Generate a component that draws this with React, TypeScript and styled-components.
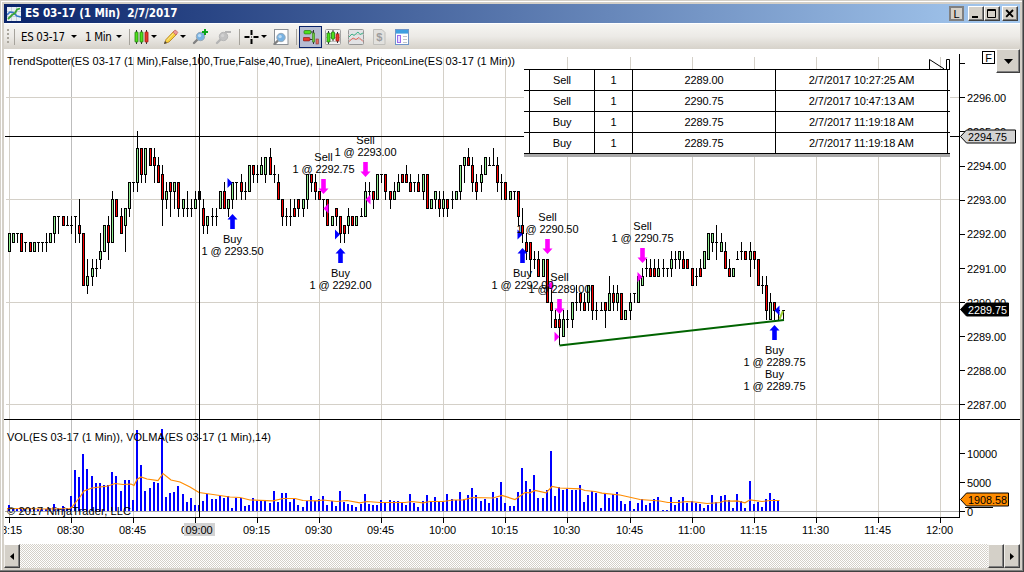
import React from 'react';
import styled, { createGlobalStyle } from 'styled-components';

const Global = createGlobalStyle`
  * { box-sizing: border-box; }
  body { margin: 0; background: #d4d0c8; overflow: hidden; }
`;

const Window = styled.div`
  width: 1024px;
  height: 572px;
  padding: 4px 2px 2px 4px;
  background: #d4d0c8;
  border-right: 1px solid #404040;
  border-bottom: 1px solid #404040;
  box-shadow: inset -1px -1px #808080, inset 1px 1px #d4d0c8, inset 2px 2px #ffffff;
  font-family: 'Liberation Sans', Arial, sans-serif;
  font-size: 11px;
  color: #000;
`;

const Client = styled.div`
  width: 1016px;
  display: flex;
  flex-direction: column;
`;

const TitleBar = styled.header`
  height: 19px;
  display: flex;
  align-items: center;
  padding: 0 2px 0 3px;
  background: linear-gradient(90deg, #0a246a, #a6caf0);
`;

const TitleText = styled.span`
  flex: 1;
  margin-left: 4px;
  font: bold 11.6px/19px 'DejaVu Sans Condensed', 'DejaVu Sans', sans-serif;
  letter-spacing: -0.12px;
  color: #fff;
  white-space: pre;
`;

const CaptionButton = styled.span<{ $gap?: number }>`
  width: 16px;
  height: 15px;
  margin-left: ${(p) => p.$gap ?? 0}px;
  background: #d4d0c8;
  border: 1px solid;
  border-color: #fff #404040 #404040 #fff;
  box-shadow: inset -1px -1px #808080;
  display: flex;
`;

const LinkButton = styled.span`
  width: 15px;
  height: 15px;
  border: 2px solid #808080;
  background: #d4d0c8;
  line-height: 12px;
  text-align: center;
`;

const Toolbar = styled.nav`
  height: 26px;
  display: flex;
  align-items: center;
  padding-left: 3px;
  border-top: 1px solid #fff;
  background: linear-gradient(#f6f5f2, #eceae6 50%, #d6d2ca);
`;

const Grip = styled.span`
  width: 2px;
  height: 15px;
  background: repeating-linear-gradient(#a9a59c 0 2px, transparent 2px 4px);
`;

const Separator = styled.span<{ $gap: number }>`
  width: 1px;
  height: 16px;
  margin-left: ${(p) => p.$gap}px;
  background: #a6a39c;
`;

const ToolLabel = styled.span<{ $gap: number; $w: number }>`
  margin-left: ${(p) => p.$gap}px;
  width: ${(p) => p.$w}px;
  font: 11.4px/14px 'DejaVu Sans Condensed', 'DejaVu Sans', sans-serif;
  letter-spacing: -0.3px;
  white-space: nowrap;
`;

const Caret = styled.span<{ $gap: number }>`
  margin-left: ${(p) => p.$gap}px;
  border: 3px solid transparent;
  border-top-color: #000;
  border-bottom: 0;
  width: 6px;
`;

const Tool = styled.span<{ $gap: number; $active?: boolean }>`
  margin-left: ${(p) => p.$gap}px;
  width: ${(p) => (p.$active ? 23 : 16)}px;
  height: ${(p) => (p.$active ? 22 : 16)}px;
  border: ${(p) => (p.$active ? '1px solid #0a246a' : '0')};
  background: ${(p) => (p.$active ? '#b6bdd2' : 'transparent')};
  display: flex;
  align-items: center;
  justify-content: center;
`;

const ChartPanel = styled.main`
  position: relative;
  height: 495px;
  background: #fff;
`;

const ChartSvg = styled.svg`
  display: block;
  font-family: 'Liberation Sans', Arial, sans-serif;
  font-size: 11px;
`;

const OrdersTable = styled.div`
  position: absolute;
  left: 520px;
  top: 20px;
  width: 426px;
  background: #fff;
  border-top: 1px solid #000;
  border-bottom: 3px solid #a9a9a9;
  padding: 0;
`;

const OrderRow = styled.div`
  height: 21px;
  padding: 0 2px 0 5px;
  border-bottom: 1px solid #000;
  display: grid;
  grid-template-columns: 65px 38px 143px 173px;
`;

const Cell = styled.span`
  border-left: 1px solid #000;
  line-height: 20px;
  text-align: center;
  letter-spacing: -0.1px;
  &:last-child { border-right: 1px solid #000; }
`;

const FixedFlag = styled.span`
  position: absolute;
  left: 978px;
  top: 2px;
  width: 13px;
  height: 13px;
  border: 1px solid #000;
  line-height: 12px;
  text-align: center;
`;

const MenuButton = styled.button`
  position: absolute;
  right: 0;
  top: 0;
  width: 24px;
  height: 24px;
  padding: 0;
  background: #d4d0c8;
  border: 1px solid;
  border-color: #f4f2ee #404040 #404040 #fff;
  box-shadow: inset -1px -1px #808080;
  display: flex;
  align-items: center;
  justify-content: center;
`;

const ScrollBar = styled.footer`
  height: 24px;
  display: flex;
  align-items: stretch;
  background: repeating-conic-gradient(#fff 0 25%, #d4d0c8 0 50%) 0 0 / 2px 2px;
`;

const ScrollButton = styled.span<{ $push?: boolean }>`
  width: 16px;
  height: 24px;
  margin-left: ${(p) => (p.$push ? 'auto' : '0')};
  background: #d4d0c8;
  border: 1px solid;
  border-color: #fff #404040 #404040 #f0eeea;
  box-shadow: inset -1px -1px #808080;
  display: flex;
  align-items: center;
  justify-content: center;
`;

/* Ticks are quarter points below 2296.00: colour, body top, body bottom, high, low. */
const CANDLES = `g16,18 g16,17 d16,16,16,17 r16,18 d17,17,17,18 r17,18 g17,18 d17,17,17,18 d17,17,17,18 d17,17,16,18
g16,17 g14,16,14,17 d14,14,14,16 r14,15 d15,15,14,15 d15,15,14,16 d14,14,14,17 r15,16,12,17 r16,22 g21,22,19,23
g20,21,19,22 d20,20,19,21 g18,19,16,20 g15,18 r15,17,14,19 g12,17,11,17 r12,14 r14,16,13,16 g13,15,13,18 g10,13,10,14
d10,10,10,11 g6,10,4,11 r6,9,6,10 g6,9,6,10 r6,8 r7,8,6,10 r8,10,7,10 r9,12,8,15 g11,12,10,13 r10,11,10,14
g10,11,10,13 r10,13,10,14 g12,13,12,14 d13,13,11,14 d13,13,12,14 g12,13,11,13 r11,12 r13,15,12,16 g14,15,14,16 d14,14,13,15
d14,14,13,15 g11,13 r11,13,10,13 g12,13,12,14 g10,12,10,13 d10,10,10,12 r10,11,9,12 d11,11,10,12 g8,11 r8,9,8,10
d9,9,8,10 g8,9,7,9 g7,9,7,10 r7,9,6,9 d9,9,8,10 r10,12,9,12 r12,14,12,15 d14,14,13,15 d14,14,12,15 r13,14,12,14
r12,13,12,14 g12,13,12,14 g9,12,9,13 r9,10,9,11 r10,11,9,12 r11,12 d12,12,12,14 r12,15 g14,15 r13,14,13,15
r14,16,14,17 r15,16,15,17 g14,15,13,16 r14,15 g14,15 d14,14,13,14 g11,14,10,14 d11,11,10,12 r11,12,11,13 g9,12
d9,9,9,10 r9,11,9,12 r11,12,11,13 g11,12,10,12 g10,11,9,11 r9,10 r9,10,8,10 r10,11,9,11 d10,10,10,11 r10,11,9,11
g9,11,9,12 r9,13 g12,13 g11,12,11,13 r12,13,11,14 g12,13,11,14 r12,13,12,14 d12,12,11,13 g11,12 g8,11,8,12
g7,8,7,10 r7,8,6,8 r8,10,7,11 r10,11,9,12 g9,10,8,11 g7,9 d8,8,7,8 d8,8,6,8 r8,10,7,11 d10,10,9,12
r10,12 g11,12 d11,11,11,12 r11,14,11,15 r15,16,13,17 r17,18,16,19 r17,19,17,21 d19,19,18,20 r19,21,18,21 g19,21
r19,24 r24,25,22,27 r26,27,25,27 r26,27,25,29 g26,28,25,28 d26,26,25,27 g24,26,24,27 d24,24,22,25 r23,24,23,25 r24,25,23,25
g22,24,22,25 r22,25,22,26 d25,25,24,26 d25,25,24,25 r24,25,24,27 g23,25,21,25 r23,24,22,25 g23,24,22,25 r23,26 g25,26
g24,25,23,26 d23,23,23,24 g21,24 g21,22,20,22 d20,20,19,21 r20,21,19,21 r20,21,19,21 g20,21,19,21 d20,20,19,21 d20,20,20,21
g19,20,18,21 d19,19,18,20 g18,19,18,20 r19,20,18,20 r19,20 r20,22 d21,21,20,22 r20,21,19,21 g18,20 g16,19
g16,17,16,18 d17,17,15,19 g17,18,16,18 r18,20,17,20 r20,21,19,21 g20,21 d19,19,18,19 d18,18,17,19 r18,19 g18,19,17,21
r18,19,18,20 r19,22 d22,22,21,23 r22,25,21,26 g24,26,23,26 r24,25,24,26 d25,25,25,26 d25,25,25,26`
  .split(/\s+/)
  .map((s) => {
    const [top, bottom, high = top, low = bottom] = s.slice(1).split(',').map(Number);
    return { kind: s[0], top, bottom, high, low };
  });

const VOLUMES = [
  6, 2, 2, 3, 2, 3, 2, 2, 2, 2, 3, 7, 3, 5, 3, 15, 41, 34, 57, 42, 35, 28, 28, 26, 26, 39, 35, 20, 31, 31, 11, 81, 46, 20,
  23, 29, 28, 82, 14, 18, 19, 25, 17, 9, 13, 6, 6, 10, 17, 12, 12, 15, 13, 15, 3, 13, 13, 5, 6, 13, 10, 10, 10, 8, 20, 9,
  18, 18, 9, 12, 6, 4, 10, 15, 10, 12, 15, 6, 10, 5, 20, 9, 7, 6, 4, 7, 17, 7, 6, 6, 11, 8, 11, 10, 10, 8, 6, 17, 8, 4,
  10, 16, 10, 14, 9, 9, 17, 12, 11, 19, 12, 16, 23, 16, 10, 12, 8, 19, 13, 29, 8, 5, 5, 19, 43, 30, 22, 36, 13, 13, 21,
  60, 15, 24, 21, 22, 21, 21, 26, 9, 16, 20, 18, 3, 17, 13, 17, 19, 10, 7, 10, 2, 8, 12, 6, 8, 12, 14, 1, 1, 14, 6, 11,
  14, 8, 10, 8, 7, 3, 6, 16, 9, 15, 16, 11, 3, 17, 10, 3, 30, 7, 9, 4, 12, 18, 12, 11,
];

const VOLMA =
  '7,508.5 48,509 70,508.5 72,507 76,502 80,497 84,491 92,488 108,486 115,483.5 123,484.5 131,484 134,485.5 137,479.5 141,477 147,479 158,480.5 163,473.5 171,480 180,482 190,487 199,492.5 213,494.5 230,497 240,497.5 250,500 273,500.8 283,498.5 295,498.5 303,500.5 317,500.8 323,500 337,501.5 347,500.5 360,502.8 367,501.5 380,502.5 405,502.5 412,501.5 423,502.8 430,501.5 443,501.5 453,500 463,499.8 473,497.5 493,498 502,495.5 515,499.5 525,492.5 530,492.8 535,490.5 546,492.8 552,486.5 560,488 580,488.8 585,490.5 595,491.5 602,493.2 620,495 640,499.5 660,501 668,502.5 678,502.5 687,501.5 695,502 707,503.5 720,502.5 725,500.8 732,501.2 737,500.8 745,502.8 750,499.8 762,501.5 770,500.5 779.5,500.5';

const xAt = (i: number) => Math.floor(9.312 + 4.138 * i);
const yAt = (t: number) => Math.round(97 + 8.53 * t);

const TIMES = ['08:15', '08:30', '08:45', '09:00', '09:15', '09:30', '09:45', '10:00', '10:15', '10:30', '10:45', '11:00', '11:15', '11:30', '11:45', '12:00'];

interface Mark { x: number; side: 'Buy' | 'Sell'; price: string; arrow: number; text: number[] }
const MARKS: Mark[] = [
  { x: 232.5, side: 'Buy', price: '2293.50', arrow: 214, text: [243] },
  { x: 323.5, side: 'Sell', price: '2292.75', arrow: 179, text: [161] },
  { x: 365.5, side: 'Sell', price: '2293.00', arrow: 162, text: [144] },
  { x: 340.5, side: 'Buy', price: '2292.00', arrow: 248, text: [277] },
  { x: 522.5, side: 'Buy', price: '2292.00', arrow: 248, text: [277] },
  { x: 547.5, side: 'Sell', price: '2290.50', arrow: 239, text: [221] },
  { x: 559.5, side: 'Sell', price: '2289.00', arrow: 299, text: [281] },
  { x: 642.5, side: 'Sell', price: '2290.75', arrow: 248, text: [230] },
  { x: 774.5, side: 'Buy', price: '2289.75', arrow: 325, text: [354, 378] },
];

/* Fill position: tip x, centre y, direction of the tip, colour. */
const FILLS: [number, number, 1 | -1, string][] = [
  [232.5, 183, 1, '#00f'], [323.5, 208.5, -1, '#f0f'], [340, 234.5, 1, '#00f'], [365.5, 199.5, -1, '#f0f'],
  [522.5, 234.5, 1, '#00f'], [547.5, 285.5, -1, '#f0f'], [559.5, 336.8, 1, '#f0f'], [642.5, 277, 1, '#f0f'],
  [774.5, 310.5, -1, '#00f'],
];

function Arrow({ x, y, up }: { x: number; y: number; up: boolean }) {
  const d = up ? 'M0 0L5 5.6H2.3V15H-2.3V5.6H-5Z' : 'M0 15L5 9.4H2.3V0H-2.3V9.4H-5Z';
  return <path d={d} transform={`translate(${x} ${y})`} fill={up ? '#00f' : '#f0f'} />;
}

function PriceTag({ y, right, fill, color, label }: { y: number; right: number; fill: string; color: string; label: string }) {
  return (
    <g>
      <path d={`M960.5 ${y}L966.5 ${y - 6.5}H${right}V${y + 6.5}H966.5Z`} fill={fill} stroke="#000" />
      <text x={968} y={y + 4} fill={color} textLength={39} lengthAdjust="spacingAndGlyphs">{label}</text>
    </g>
  );
}

function Chart() {
  return (
    <ChartSvg width="1016" height="495" viewBox="4 49 1016 495">
      <g shapeRendering="crispEdges">
        {TIMES.map((t, n) => (
          <rect key={t} x={xAt(n * 15)} y={57} width={1} height={460} fill={n === 1 ? '#bdbdbd' : '#d4d0c8'} />
        ))}
        {[97, 199, 302, 404].map((y) => <rect key={y} x={6} y={y} width={953} height={1} fill="#d4d0c8" />)}
        <rect x={5} y={511} width={954} height={1} fill="#a9a9a9" />
        {VOLUMES.map((h, i) => <rect key={i} x={xAt(i) - 1} y={511 - h} width={2} height={h} fill="#00f" />)}
        {CANDLES.map((c, i) => {
          const x = xAt(i);
          const top = yAt(c.top);
          const h = yAt(c.bottom) - top;
          return (
            <g key={i}>
              <rect x={x} y={yAt(c.high)} width={1} height={yAt(c.low) - yAt(c.high) + 1} />
              <rect x={x - 1} y={top} width={3} height={h + 1} />
              {c.kind !== 'd' && <rect x={x} y={top + 1} width={1} height={h - 1} fill={c.kind === 'g' ? '#90ee90' : '#f00'} />}
            </g>
          );
        })}
      </g>
      <polyline points={VOLMA} fill="none" stroke="#ff8c00" strokeWidth="1.2" />
      <path d="M779.5 319L783 311" stroke="#9acd32" strokeWidth="2" />
      <path d="M559.5 345.5L784 320" stroke="#006400" strokeWidth="2" />
      {FILLS.map(([x, y, dir, c]) => <path key={x} d={`M${x} ${y}l${-5 * dir} -5v10Z`} fill={c} />)}
      {MARKS.map((m) => (
        <g key={m.x}>
          <Arrow x={m.x} y={m.arrow} up={m.side === 'Buy'} />
          {m.text.map((y) => (
            <g key={y} textAnchor="middle">
              <text x={m.x} y={y}>{m.side}</text>
              <text x={m.x} y={y + 12} textLength={62}>{`1 @ ${m.price}`}</text>
            </g>
          ))}
        </g>
      ))}
      <text x={7} y={65} textLength={508}>TrendSpotter(ES 03-17 (1 Min),False,100,True,False,40,True), LineAlert, PriceonLine(ES 03-17 (1 Min))</text>
      <text x={7} y={441} textLength={264}>VOL(ES 03-17 (1 Min)), VOLMA(ES 03-17 (1 Min),14)</text>
      <text x={7} y={515} textLength={124}>© 2017 NinjaTrader, LLC</text>
      <g shapeRendering="crispEdges">
        <rect x={5} y={136} width={954} height={1} />
        <rect x={199} y={54} width={1} height={463} />
        <rect x={4} y={419} width={1016} height={1} />
        <rect x={959} y={54} width={1} height={464} />
        <rect x={5} y={517} width={955} height={1} />
        {[63, 97, 131, 166, 200, 234, 268, 302, 336, 370, 404, 453, 482, 511].map((y) => (
          <rect key={y} x={959} y={y} width={6} height={1} />
        ))}
        {TIMES.map((t, n) => <rect key={t} x={xAt(n * 15)} y={517} width={1} height={6} />)}
      </g>
      {[2296, 2295, 2294, 2293, 2292, 2291, 2290, 2289, 2288, 2287].map((p) => (
        <text key={p} x={967} y={yAt((2296 - p) * 4) + 5} textLength={39}>{p.toFixed(2)}</text>
      ))}
      <text x={967} y={458} textLength={30}>10000</text>
      <text x={967} y={487} textLength={24}>5000</text>
      <text x={967} y={516}>0</text>
      {TIMES.map((t, n) => (
        <text key={t} x={xAt(n * 15) - 14} y={534} textLength={27}>{t}</text>
      ))}
      <rect x={184} y={523} width={31} height={13} fill="#d3d3d3" />
      <text x={185.5} y={534} textLength={27}>09:00</text>
      <PriceTag y={136.5} right={1015.5} fill="#d3d3d3" color="#000" label="2294.75" />
      <PriceTag y={309.5} right={1008.5} fill="#000" color="#fff" label="2289.75" />
      <path d="M965 507.5H993" stroke="#000" />
      <PriceTag y={499.5} right={1008.5} fill="#ff8c00" color="#000" label="1908.58" />
      <path d="M929.5 69V59.5L944 68.8M946.5 69V59.5H949.5V69" fill="none" stroke="#000" />
    </ChartSvg>
  );
}

function Magnifier({ gray }: { gray?: boolean }) {
  return (
    <g>
      <path d="M2 14L6 10" stroke={gray ? '#b4b4b4' : '#808080'} strokeWidth="2.4" strokeLinecap="round" />
      <circle cx="8.5" cy="7.5" r="4.2" fill={gray ? '#c2c2c2' : '#78b2e2'} stroke={gray ? '#b6b6b6' : '#98a8b6'} />
      <circle cx="7.6" cy="6.6" r="1.7" fill={gray ? '#d2d2d2' : '#bcdcf5'} />
    </g>
  );
}

function Bars({ small }: { small?: boolean }) {
  const list: [number, number, number, string][] = small
    ? [[3.5, 4, 9, '#4ee01c'], [8, 3, 7, '#4ee01c'], [12.5, 5, 7, '#e8392c']]
    : [[2.5, 3, 10, '#4ee01c'], [7.5, 3, 10, '#4ee01c'], [12.5, 3, 10, '#e8392c']];
  return (
    <g>
      {list.map(([x, y, h, f]) => (
        <g key={x}>
          <path d={`M${x} ${y - 2}V${y + h + 2}`} stroke="#333" />
          <rect x={x - 1.5} y={y} width="3" height={h} rx="0.5" fill={f} stroke={f === '#e8392c' ? '#9c1a12' : '#1e7a0c'} strokeWidth="0.8" />
        </g>
      ))}
    </g>
  );
}

const Icon = ({ children, size = 16 }: { children: React.ReactNode; size?: number }) => (
  <svg width={size} height={size} viewBox="0 0 16 16" fill="none">{children}</svg>
);

const ORDERS = [
  ['Sell', '1', '2289.00', '2/7/2017 10:27:25 AM'],
  ['Sell', '1', '2290.75', '2/7/2017 10:47:13 AM'],
  ['Buy', '1', '2289.75', '2/7/2017 11:19:18 AM'],
  ['Buy', '1', '2289.75', '2/7/2017 11:19:18 AM'],
];

export default function App() {
  return (
    <Window>
      <Global />
      <Client>
        <TitleBar>
          <svg width="14" height="14" viewBox="0 0 14 14" fill="none">
            <rect width="14" height="14" fill="#e8eef4" />
            <path d="M0 4.5H14M0 9.5H14M4.5 0V14M9.5 0V14" stroke="#b4c2d0" strokeWidth="0.7" />
            <path d="M0 8L3 5L6 5.5L10 9L14 10" stroke="#3476c8" strokeWidth="1.6" />
            <path d="M1 12L5 8L8 6L10 2.5L13 1.5" stroke="#3aa536" strokeWidth="1.8" />
          </svg>
          <TitleText>{'ES 03-17 (1 Min)  2/7/2017'}</TitleText>
          <LinkButton>L</LinkButton>
          <CaptionButton $gap={4}><svg width="14" height="13"><rect x="3" y="9" width="6" height="2" /></svg></CaptionButton>
          <CaptionButton><svg width="14" height="13"><path d="M2.5 2.5H10.5V10.5H2.5ZM2.5 3.5H10.5" fill="none" stroke="#000" /></svg></CaptionButton>
          <CaptionButton $gap={2}><svg width="14" height="13"><path d="M3.2 3L10 9.8M10 3L3.2 9.8" stroke="#000" strokeWidth="1.9" /></svg></CaptionButton>
        </TitleBar>

        <Toolbar>
          <Grip />
          <Separator $gap={5} />
          <ToolLabel $gap={6} $w={45}>ES 03-17</ToolLabel>
          <Caret $gap={5} />
          <ToolLabel $gap={8} $w={26}>1 Min</ToolLabel>
          <Caret $gap={5} />
          <Separator $gap={7} />
          <Tool $gap={4}><Icon><Bars /></Icon></Tool>
          <Caret $gap={1} />
          <Tool $gap={6}>
            <Icon>
              <path d="M1.5 14.5L3 10.5L11 2L14 5L6 13Z" fill="#f6cf3c" stroke="#b8862a" strokeWidth="0.9" />
              <path d="M10 3.2L11.8 1.2Q13 .8 14.8 3.4L13 6Z" fill="#ef9a9a" stroke="#c0605c" strokeWidth="0.7" />
              <path d="M1 15L2 12L4 14Z" fill="#444" />
              <path d="M4 11.5L10.5 4.5" stroke="#fbeb9a" />
            </Icon>
          </Tool>
          <Caret $gap={1} />
          <Tool $gap={6}><Icon><Magnifier /><path d="M13 0V6M10 3H16" stroke="#0aa51a" strokeWidth="2" /></Icon></Tool>
          <Tool $gap={7}><Icon><Magnifier gray /><path d="M10 3H16" stroke="#b6b6b6" strokeWidth="2" /></Icon></Tool>
          <Separator $gap={8} />
          <Tool $gap={4}><Icon><path d="M7.5 1V6M7.5 10V15M.5 8H5.5M9.5 8H14.5" stroke="#000" strokeWidth="2" /><rect x="7" y="7.5" width="1" height="1" fill="#000" /></Icon></Tool>
          <Caret $gap={1} />
          <Tool $gap={6}>
            <Icon>
              <rect x="1.5" y=".5" width="13.5" height="15" fill="#fff" stroke="#8a8f94" />
              <g transform="translate(-.5 1)"><Magnifier /></g>
            </Icon>
          </Tool>
          <Separator $gap={7} />
          <Tool $gap={2} $active>
            <Icon>
              <rect x="1" y="1.5" width="7" height="3.4" rx="1" fill="#4ee01c" stroke="#267b12" strokeWidth="0.7" />
              <rect x="0" y="8.5" width="7" height="3.4" rx="1" fill="#e8392c" stroke="#7e241c" strokeWidth="0.7" />
              <path d="M8 3H10M7 10.5H10M10.5 1V15" stroke="#333" />
              <rect x="9.3" y="4" width="2.4" height="9" fill="#6cc83c" stroke="#3d7a28" strokeWidth="0.6" />
              <rect x="13" y="10" width="2.4" height="5" fill="#e06a62" stroke="#8a3a34" strokeWidth="0.6" />
            </Icon>
          </Tool>
          <Tool $gap={3}>
            <Icon>
              <rect x=".5" y=".5" width="15" height="15" rx="1" fill="#f2f2f2" stroke="#a2a2a2" />
              <path d="M0 4.5H16M0 8.5H16M0 12.5H16" stroke="#aaa" strokeWidth="0.7" />
              <Bars small />
            </Icon>
          </Tool>
          <Tool $gap={7}>
            <Icon>
              <rect x=".5" y=".5" width="15" height="15" rx="1" fill="#e2e3e5" stroke="#969696" />
              <path d="M0 5.5H16M0 10.5H16" stroke="#c5c5c5" strokeWidth="0.7" />
              <path d="M1 8L4 5L6 6.5L10 3L12 5.5L15 4" stroke="#3db489" />
              <path d="M1 12.5L5 9L8 10.5L11 8.5L15 12.5" stroke="#e0685c" />
            </Icon>
          </Tool>
          <Tool $gap={7}>
            <Icon>
              <path d="M2.5 .5H11L14 3.5V15.5H2.5Z" fill="#e2e1de" stroke="#c0bfbb" />
              <text x="8.2" y="12.2" textAnchor="middle" fontFamily="Liberation Sans" fontWeight="bold" fontSize="11" fill="#9d9d9d">$</text>
            </Icon>
          </Tool>
          <Tool $gap={7}>
            <Icon>
              <rect x="1.5" y=".5" width="13" height="15" fill="#fff" stroke="#6f95c8" />
              <rect x="2" y="1" width="12" height="3.6" fill="#3f9fe0" />
              <rect x="3.5" y="6.5" width="3" height="7" fill="#eadfff" stroke="#9a6cf0" />
              <path d="M9 7.5H13M9 10.5H13M9 13.5H13" stroke="#c0c4ca" />
            </Icon>
          </Tool>
        </Toolbar>

        <ChartPanel>
          <Chart />
          <OrdersTable>
            {ORDERS.map((row, r) => (
              <OrderRow key={r}>{row.map((v, c) => <Cell key={c}>{v}</Cell>)}</OrderRow>
            ))}
          </OrdersTable>
          <FixedFlag>F</FixedFlag>
          <MenuButton><svg width="9" height="5"><path d="M0 0H9L4.5 5Z" /></svg></MenuButton>
        </ChartPanel>

        <ScrollBar>
          <ScrollButton><svg width="4" height="7"><path d="M4 0V7L0 3.5Z" /></svg></ScrollButton>
          <ScrollButton $push />
          <ScrollButton><svg width="4" height="7"><path d="M0 0V7L4 3.5Z" /></svg></ScrollButton>
        </ScrollBar>
      </Client>
    </Window>
  );
}
